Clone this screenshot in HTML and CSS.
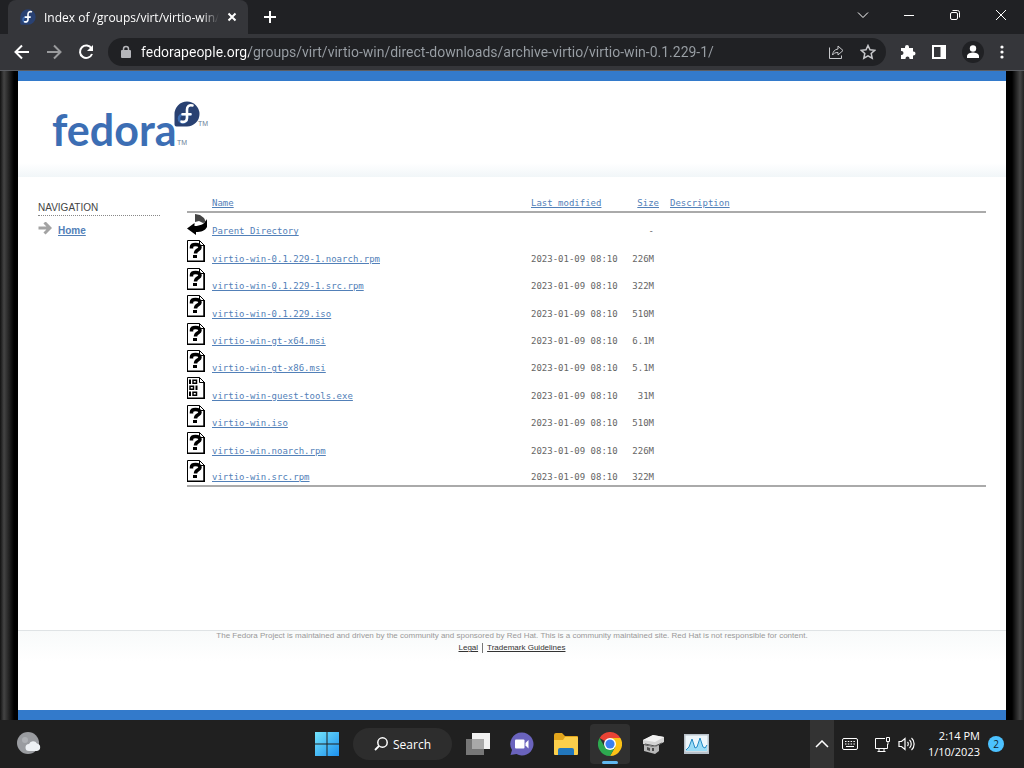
FILE: index.html
```
<!DOCTYPE html>
<html lang="en">
<head>
    <meta charset="UTF-8">
    <meta name="viewport" content="width=device-width, initial-scale=1.0">
    <title>Index of /groups/virt/virtio-win/direct-downloads</title>
    <link rel="stylesheet" href="styles.css">
</head>
<body>
    <!-- Shared symbols -->
    <svg class="symbols" width="0" height="0" aria-hidden="true">
        <symbol id="fedora-badge" viewBox="0 0 26 26">
            <path d="M13 0.5A12.5 12.5 0 1 1 13 25.5H2.5A2 2 0 0 1 0.5 23.500V13A12.5 12.5 0 0 1 13 0.500Z" fill="#294172"/>
            <path d="M13 13v4.500a4 4 0 1 1-4-4h8.500" fill="none" stroke="#3c6eb4" stroke-width="2.600"/>
            <path d="M18.500 4.500c-3.500-1-5.500 1-5.500 4v8.500c0 3-2.500 4.500-5.500 3.700M8.500 13.200h8" fill="none" stroke="#fff" stroke-width="2.600" stroke-linecap="round"/>
        </symbol>
        <symbol id="file-unknown" viewBox="0 0 18 22">
            <path d="M0.500 0.500h12l5 5v16h-17z" fill="#fff" stroke="#000"/>
            <path d="M17 5v16.500M0 21.300h18" stroke="#000" stroke-width="1.500"/>
            <path d="M12.500 0.500v5h5" fill="none" stroke="#000"/>
            <path d="M4.500 8.500V7c0-2 1.500-2.500 4-2.500 3 0 4.500 1 4.500 3 0 2.500-4.500 2-4.500 6" fill="none" stroke="#000" stroke-width="3.500"/>
            <path d="M6 15h4v3H6z"/>
        </symbol>
        <symbol id="file-binary" viewBox="0 0 18 22">
            <path d="M0.500 0.500h12l5 5v16h-17z" fill="#fff" stroke="#000"/>
            <path d="M17 5v16.500M0 21.300h18" stroke="#000" stroke-width="1.500"/>
            <path d="M12.500 0.500v5h5" fill="none" stroke="#000"/>
            <path d="M3 2.500v4.500M9.500 8.500v4.500M3 14.500v4.500" stroke="#000" stroke-width="2"/>
            <path d="M6 3.200h3.500v3H6zM3 9.200h3.500v3H3zM6 15.200h3.500v3H6z" fill="none" stroke="#000" stroke-width="1.500"/>
        </symbol>
    </svg>

    <header class="browser">
        <div class="tab-strip">
            <div class="tab">
                <svg class="tab-icon" width="16" height="16"><use href="#fedora-badge"/></svg>
                <span class="tab-title">Index of /groups/virt/virtio-win/d</span>
                <button class="tab-close" aria-label="Close tab">
                    <svg width="10" height="10" viewBox="0 0 10 10"><path d="M1.500 1.500l7 7M8.500 1.500l-7 7"/></svg>
                </button>
            </div>
            <button class="new-tab" aria-label="New tab">
                <svg width="14" height="14" viewBox="0 0 14 14"><path d="M7 1v12M1 7h12" stroke-width="2"/></svg>
            </button>
            <div class="window-buttons">
                <button aria-label="Search tabs"><svg width="12" height="12" viewBox="0 0 12 12"><path d="M1 3.500l5 5 5-5"/></svg></button>
                <button aria-label="Minimize"><svg width="12" height="12" viewBox="0 0 12 12"><path d="M1 6.500h10"/></svg></button>
                <button aria-label="Restore"><svg width="12" height="12" viewBox="0 0 12 12"><rect x="1.500" y="3.500" width="7" height="7" rx="1.500"/><path d="M3.500 1.500h5a2 2 0 0 1 2 2v5"/></svg></button>
                <button aria-label="Close"><svg width="12" height="12" viewBox="0 0 12 12"><path d="M1 1l10 10M11 1L1 11"/></svg></button>
            </div>
        </div>
        <div class="toolbar">
            <div class="history-buttons">
                <button aria-label="Back"><svg width="16" height="16" viewBox="0 0 16 16"><path d="M15 8H2M8 1.500L1.500 8 8 14.500" stroke-width="2"/></svg></button>
                <button class="disabled" aria-label="Forward"><svg width="16" height="16" viewBox="0 0 16 16"><path d="M1 8h13M8 1.500L14.500 8 8 14.500" stroke-width="2"/></svg></button>
                <button aria-label="Reload"><svg width="16" height="16" viewBox="0 0 16 16"><path d="M13.500 4.500A6.200 6.200 0 1 0 14 10" stroke-width="2"/><path d="M15 1v6H9z" fill="#fff" stroke="none"/></svg></button>
            </div>
            <div class="address-bar">
                <svg width="10" height="14" viewBox="0 0 10 14"><path d="M2.500 6V4a2.500 2.500 0 0 1 5 0v2" stroke="#b5b6ba" stroke-width="1.500"/><rect y="5" width="10" height="8" rx="1" fill="#b5b6ba" stroke="none"/></svg>
                <input class="address" type="text" aria-label="Address" value="fedorapeople.org/groups/virt/virtio-win/direct-downloads/archive-virtio/virtio-win-0.1.229-1/">
                <button aria-label="Share"><svg width="16" height="16" viewBox="0 0 16 16"><path d="M1.500 3.500v11h12v-3"/><path d="M10 2l5 4.500-5 4.500V8.500C7 8.500 5.500 9.500 4.500 11c.5-3.500 2-5.500 5.500-6z"/></svg></button>
                <button aria-label="Bookmark"><svg width="16" height="16" viewBox="0 0 16 16"><path d="M8 1.500l2 4.300 4.700.5-3.500 3.200 1 4.700L8 11.800l-4.200 2.400 1-4.700L1.300 6.300 6 5.800z" stroke-width="1.500"/></svg></button>
            </div>
            <div class="toolbar-buttons">
                <button aria-label="Extensions"><svg width="16" height="16" viewBox="0 0 16 16"><path d="M1 4h4V3a2 2 0 1 1 4 0v1h4v3.500h.5a2 2 0 1 1 0 4H13V15H9.500v-.5a2 2 0 0 0-4 0v.5H1v-4h.5a2 2 0 0 0 0-4H1z" fill="#fff" stroke="none"/></svg></button>
                <button aria-label="Side panel"><svg width="14" height="14" viewBox="0 0 14 14"><rect x="1" y="1" width="12" height="12" stroke-width="2"/><path d="M9 1h4v12H9z" fill="#fff"/></svg></button>
                <button aria-label="Profile"><svg width="22" height="22" viewBox="0 0 22 22"><circle cx="11" cy="11" r="11" fill="#202124" stroke="none"/><circle cx="11" cy="7.500" r="3.200" fill="#fff" stroke="none"/><path d="M5 17v-2c0-2.500 4-3.500 6-3.500s6 1 6 3.500v2z" fill="#fff" stroke="none"/></svg></button>
                <button aria-label="Menu"><svg width="4" height="14" viewBox="0 0 4 14"><g fill="#fff" stroke="none"><circle cx="2" cy="2" r="1.600"/><circle cx="2" cy="7" r="1.600"/><circle cx="2" cy="12" r="1.600"/></g></svg></button>
            </div>
        </div>
    </header>

    <div class="viewport">
        <div class="site">
            <div class="site-header">
                <a href="#" class="logo" aria-label="Fedora">
                    <svg width="158" height="50" viewBox="0 0 158 50">
                        <text class="logo-text" x="1" y="45">fedora</text>
                        <text class="logo-tm" x="126" y="44">TM</text>
                        <text class="logo-tm" x="147" y="25">TM</text>
                        <use href="#fedora-badge" x="123" y="0" width="26" height="26"/>
                    </svg>
                </a>
            </div>

            <div class="site-body">
                <nav class="sidebar">
                    <h2>NAVIGATION</h2>
                    <ul>
                        <li>
                            <svg width="14" height="14" viewBox="0 0 14 14"><path d="M0.500 6H11M6.500 0.500L12 6l-5.500 5.500" fill="none" stroke="#a3a3a3" stroke-width="3"/></svg>
                            <a href="#">Home</a>
                        </li>
                    </ul>
                </nav>

                <main>
                    <table class="listing">
                        <colgroup>
                            <col class="col-icon">
                            <col class="col-name">
                            <col class="col-date">
                            <col class="col-size">
                            <col>
                        </colgroup>
                        <thead>
                            <tr>
                                <th></th>
                                <th><a href="#">Name</a></th>
                                <th><a href="#">Last modified</a></th>
                                <th class="size"><a href="#">Size</a></th>
                                <th class="description"><a href="#">Description</a></th>
                            </tr>
                        </thead>
                        <tbody>
                            <tr>
                                <td class="icon"><svg width="21" height="22" viewBox="0 0 21 22"><path d="M8 0l5 1 4 3 2 4-3 1-4-2-4 1z" fill="#444"/><path d="M20 5v8c-2 4-6 5-11 5v3L0 14.500 7.500 9v3c6 0 10-2 12.500-7z"/></svg></td>
                                <td><a href="#">Parent Directory</a></td><td></td><td class="size">-</td><td></td>
                            </tr>
                            <tr>
                                <td class="icon"><svg width="18" height="22"><use href="#file-unknown"/></svg></td>
                                <td><a href="#">virtio-win-0.1.229-1.noarch.rpm</a></td><td>2023-01-09 08:10</td><td class="size">226M</td><td></td>
                            </tr>
                            <tr>
                                <td class="icon"><svg width="18" height="22"><use href="#file-unknown"/></svg></td>
                                <td><a href="#">virtio-win-0.1.229-1.src.rpm</a></td><td>2023-01-09 08:10</td><td class="size">322M</td><td></td>
                            </tr>
                            <tr>
                                <td class="icon"><svg width="18" height="22"><use href="#file-unknown"/></svg></td>
                                <td><a href="#">virtio-win-0.1.229.iso</a></td><td>2023-01-09 08:10</td><td class="size">510M</td><td></td>
                            </tr>
                            <tr>
                                <td class="icon"><svg width="18" height="22"><use href="#file-unknown"/></svg></td>
                                <td><a href="#">virtio-win-gt-x64.msi</a></td><td>2023-01-09 08:10</td><td class="size">6.1M</td><td></td>
                            </tr>
                            <tr>
                                <td class="icon"><svg width="18" height="22"><use href="#file-unknown"/></svg></td>
                                <td><a href="#">virtio-win-gt-x86.msi</a></td><td>2023-01-09 08:10</td><td class="size">5.1M</td><td></td>
                            </tr>
                            <tr>
                                <td class="icon"><svg width="18" height="22"><use href="#file-binary"/></svg></td>
                                <td><a href="#">virtio-win-guest-tools.exe</a></td><td>2023-01-09 08:10</td><td class="size">31M</td><td></td>
                            </tr>
                            <tr>
                                <td class="icon"><svg width="18" height="22"><use href="#file-unknown"/></svg></td>
                                <td><a href="#">virtio-win.iso</a></td><td>2023-01-09 08:10</td><td class="size">510M</td><td></td>
                            </tr>
                            <tr>
                                <td class="icon"><svg width="18" height="22"><use href="#file-unknown"/></svg></td>
                                <td><a href="#">virtio-win.noarch.rpm</a></td><td>2023-01-09 08:10</td><td class="size">226M</td><td></td>
                            </tr>
                            <tr>
                                <td class="icon"><svg width="18" height="22"><use href="#file-unknown"/></svg></td>
                                <td><a href="#">virtio-win.src.rpm</a></td><td>2023-01-09 08:10</td><td class="size">322M</td><td></td>
                            </tr>
                        </tbody>
                    </table>
                </main>
            </div>

            <footer class="site-footer">
                <p>The Fedora Project is maintained and driven by the community and sponsored by Red Hat. This is a community maintained site. Red Hat is not responsible for content.</p>
                <ul>
                    <li><a href="#">Legal</a></li>
                    <li><a href="#">Trademark Guidelines</a></li>
                </ul>
            </footer>
        </div>
    </div>

    <div class="taskbar">
        <button class="weather" aria-label="Weather">
            <svg width="24" height="24" viewBox="0 0 24 24"><circle cx="11" cy="11" r="11" fill="#9a9ca0"/><circle cx="8" cy="8" r="3" fill="#aeb0b4"/><path d="M12 19a3.500 3.500 0 0 1 0-7 4.500 4.500 0 0 1 8-.5 3.800 3.800 0 0 1 0 7.500z" fill="#eef1f4"/></svg>
        </button>
        <div class="apps">
            <button aria-label="Start">
                <svg width="24" height="24" viewBox="0 0 24 24"><defs><linearGradient id="win" x2="1" y2="1"><stop offset="0" stop-color="#74e4fb"/><stop offset="1" stop-color="#1c90ee"/></linearGradient></defs><path d="M0 0h11.500v11.500H0zM12.500 0H24v11.500H12.500zM0 12.500h11.500V24H0zM12.500 12.500H24V24H12.500z" fill="url(#win)"/></svg>
            </button>
            <button class="search">
                <svg width="14" height="14" viewBox="0 0 14 14"><circle cx="8.500" cy="5.500" r="4.700" fill="none" stroke="#fff" stroke-width="1.500"/><path d="M5 9l-4 4" stroke="#fff" stroke-width="1.800"/></svg>
                Search
            </button>
            <button aria-label="Task view">
                <svg width="24" height="24" viewBox="0 0 24 24"><path d="M6 1h18v16H6z" fill="#f1f1f1"/><path d="M0 7h18v16H0z" fill="#777"/><path d="M6 7h12v10H6z" fill="#a9a9a9"/></svg>
            </button>
            <button aria-label="Chat">
                <svg width="24" height="24" viewBox="0 0 24 24"><path d="M12 0.500a11.500 11.500 0 1 1-5.500 21.600L0.500 23l1.500-5A11.500 11.500 0 0 1 12 .5z" fill="#6a63bd"/><rect x="5" y="7.500" width="9.500" height="9" rx="1" fill="#fff"/><path d="M15.500 11l3-3v8.500l-3-3z" fill="#fff"/></svg>
            </button>
            <button aria-label="File Explorer">
                <svg width="24" height="24" viewBox="1 0 24 24"><path d="M1 3a2 2 0 0 1 2-2h6l3 3h12a1 1 0 0 1 1 1v6H1z" fill="#e2a51c"/><path d="M1 8h9l2-3h12a1 1 0 0 1 1 1v16a1 1 0 0 1-1 1H2a1 1 0 0 1-1-1z" fill="#fccf4b"/><path d="M5 23v-5a2 2 0 0 1 2-2h12a2 2 0 0 1 2 2v5z" fill="#2277bd"/></svg>
            </button>
            <button class="active" aria-label="Chrome">
                <svg width="24" height="24" viewBox="0 0 24 24"><path d="M12 12L1.600 6A12 12 0 0 1 22.400 6z" fill="#ea4335"/><path d="M12 6h10.400A12 12 0 0 1 12 24l5.200-9z" fill="#fbc116"/><path d="M1.600 6A12 12 0 0 0 12 24l5.200-9H6.800z" fill="#2da94f"/><circle cx="12" cy="12" r="6" fill="#fff"/><circle cx="12" cy="12" r="4.600" fill="#3a7ff0"/></svg>
            </button>
            <button aria-label="Server">
                <svg width="22" height="22" viewBox="0 0 22 22"><path d="M1 7l10-5 11 2v5l-9 5L1 11z" fill="#d4d4d4"/><path d="M1 7l10-5 11 2-9 5z" fill="#f2f2f2"/><path d="M2 12l11 2 4-2v6l-4 3-11-3z" fill="#b7b7b7"/><path d="M5 14l3 1v3l-3-1zM10 15h2v3h-2z" fill="#4c4c4c"/><path d="M3 11l10 2 7-3" fill="none" stroke="#555"/></svg>
            </button>
            <button aria-label="Performance monitor">
                <svg width="25" height="20" viewBox="0 0 25 20"><path d="M0 0h25v20H0z" fill="#b8c1ca"/><path d="M1.500 1.500h22v16h-22z" fill="#edf6fb"/><path d="M2 16l3-3 3-8 3 9 2-1 3-9 3 9 2 1 2-3v6H2z" fill="#9bdcf6"/><path d="M2 16l3-3 3-8 3 9 2-1 3-9 3 9 2 1 2-3" fill="none" stroke="#248bc5"/></svg>
            </button>
        </div>
        <div class="tray">
            <button class="tray-more" aria-label="Show hidden icons"><svg width="14" height="8" viewBox="0 0 14 8"><path d="M1 7l6-6 6 6" stroke-width="1.500"/></svg></button>
            <button class="tray-keyboard" aria-label="Keyboard"><svg width="16" height="12" viewBox="0 0 16 12"><rect x="0.500" y="0.500" width="15" height="11" rx="1.500"/><path d="M3 3.500h10M3 6h10" stroke-dasharray="1.500 1.300"/><path d="M4 8.500h8"/></svg></button>
            <button class="tray-status" aria-label="Network and volume">
                <svg width="17" height="17" viewBox="0 0 17 17"><path d="M11 2.500H1.500v10h12V8M5 12.500v3M10 12.500v3M3.500 15.500h8M12.500 1.500h3v4h-3zM14 5.500v3h-1"/></svg>
                <svg width="17" height="16" viewBox="0 0 17 16"><path d="M1 5.500h2.500L7 2.500v11l-3.500-3H1zM9.500 6c1 1 1 3 0 4M11.500 4c2.300 2 2.300 6 0 8M13.500 2c3.500 3 3.500 9 0 12" stroke-width="1.200"/></svg>
            </button>
            <button class="clock"><span>2:14 PM</span><span>1/10/2023</span></button>
            <span class="badge">2</span>
        </div>
    </div>
</body>
</html>
```
FILE: styles.css
```
* {
    box-sizing: border-box;
}
body {
    margin: 0;
    min-height: 100vh;
    display: flex;
    flex-direction: column;
    font-family: "Liberation Sans", Arial, sans-serif;
    background-color: #000;
}
button {
    display: flex;
    align-items: center;
    justify-content: center;
    padding: 0;
    border: none;
    background: none;
    color: #fff;
    font-family: "Open Sans", sans-serif;
}
svg {
    display: block;
    flex-shrink: 0;
}
ul {
    list-style: none;
    margin: 0;
    padding: 0;
}
.symbols {
    position: absolute;
}

/* Browser */
.browser {
    background-color: #35363a;
    border-bottom: 1px solid #5b5d62;
}
.browser button svg,
.address-bar > svg {
    fill: none;
    stroke: #fff;
}
.tab-strip {
    display: flex;
    height: 34px;
    padding-left: 8px;
    background-color: #202124;
}
.tab {
    display: flex;
    align-items: center;
    width: 240px;
    padding: 0 11px 0 12px;
    gap: 8px;
    border-radius: 8px 8px 0 0;
    background-color: #35363a;
}
.tab-title {
    flex: 1;
    min-width: 0;
    white-space: nowrap;
    color: #fff;
    font: 12px "Open Sans", sans-serif;
    -webkit-mask-image: linear-gradient(90deg, #000 90%, transparent);
    mask-image: linear-gradient(90deg, #000 90%, transparent);
}
.tab-close svg {
    stroke-width: 2;
}
.new-tab {
    width: 44px;
}
.window-buttons {
    display: flex;
    align-items: center;
    margin-left: auto;
    padding-bottom: 5px;
}
.window-buttons button {
    width: 46px;
}
.toolbar {
    display: flex;
    align-items: center;
    height: 36px;
    padding: 0 20px 0 14px;
    gap: 14px;
}
.history-buttons,
.toolbar-buttons {
    display: flex;
    align-items: center;
    gap: 16px;
}
.disabled {
    opacity: 0.5;
}
.address-bar {
    flex: 1;
    display: flex;
    align-items: center;
    height: 28px;
    padding: 0 10px 0 13px;
    gap: 10px;
    border-radius: 14px;
    background-color: #202124;
}
.address-bar button + button {
    margin-left: 6px;
}
.address-bar button svg {
    stroke: #c8c9cc;
}
.address {
    flex: 1;
    min-width: 0;
    padding: 0;
    border: none;
    outline: none;
    font: 14px Roboto, sans-serif;
    color: transparent;
    background: linear-gradient(90deg, #fff 108px, #9aa0a6 108px);
    -webkit-background-clip: text;
    background-clip: text;
}

/* Site */
.viewport {
    flex: 1;
    display: flex;
    padding: 0 18px;
    background: linear-gradient(90deg, #111 0, #444 4px, #000 14px, #000 calc(100% - 12px), #444 calc(100% - 4px), #222 100%);
}
.site {
    flex: 1;
    display: flex;
    flex-direction: column;
    border-top: 10px solid #337acb;
    border-bottom: 10px solid #337acb;
    background-color: #fff;
}
.site-header {
    height: 96px;
    padding: 20px 33px;
    background: linear-gradient(#fff 82px, #f1f6f8);
}
.logo {
    display: inline-block;
}
.logo svg {
    overflow: visible;
}
.logo-text {
    font: bold 43px Lato, sans-serif;
    fill: #3c6eb4;
}
.logo-tm {
    font: 7px "Liberation Sans", sans-serif;
    fill: #6d7f99;
}
.site-body {
    flex: 1;
    display: flex;
    gap: 27px;
    padding: 20px;
}
.site a {
    color: #5280b8;
}
.sidebar {
    width: 122px;
}
.sidebar h2 {
    margin: 5px 0;
    padding-bottom: 1px;
    border-bottom: 1px dotted #888;
    color: #444;
    font-size: 10px;
    font-weight: normal;
    line-height: 12px;
}
.sidebar li {
    display: flex;
    align-items: center;
    gap: 6px;
    font-size: 10px;
    font-weight: bold;
}
.sidebar li a {
    padding-top: 4px;
}
main {
    flex: 1;
}
.listing {
    width: 100%;
    height: 290px;
    table-layout: fixed;
    border-collapse: collapse;
    border-bottom: 2px solid #aaa;
    color: #666;
    font-family: "DejaVu Sans Mono", monospace;
    font-size: 9px;
    line-height: 12px;
}
.listing th {
    height: 15px;
    padding: 0 0 2px;
    border-bottom: 2px solid #aaa;
    font-weight: normal;
    text-align: left;
}
.listing td {
    height: 27px;
    padding: 0 0 2px;
    vertical-align: bottom;
}
.listing td.icon {
    padding: 1px 0 0;
    vertical-align: top;
}
.listing td.size {
    padding-right: 5px;
    text-align: right;
}
.listing th.size {
    text-align: right;
}
.listing th.description {
    padding-left: 11px;
}
.col-icon {
    width: 25px;
}
.col-name {
    width: 319px;
}
.col-date {
    width: 92px;
}
.col-size {
    width: 36px;
}
.site-footer {
    height: 80px;
    border-top: 1px solid #dfe3e5;
    background: linear-gradient(#f8fafa, #fff 30px);
    color: #999;
    font-size: 8px;
    line-height: 10px;
    text-align: center;
}
.site-footer p {
    margin: 0 0 2px;
}
.site-footer ul {
    display: flex;
    justify-content: center;
}
.site-footer li + li {
    margin-left: 4px;
    padding-left: 4px;
    border-left: 1px solid #777;
}
.site-footer a {
    color: #333;
}

/* Taskbar */
.taskbar {
    display: grid;
    grid-template-columns: 1fr auto 1fr;
    height: 48px;
    background-color: #202020;
}
.weather {
    justify-self: start;
    padding-left: 17px;
}
.apps {
    display: flex;
    align-items: center;
    gap: 20px;
}
.apps .search {
    width: 99px;
    height: 32px;
    margin: 0 -6px;
    gap: 5px;
    border-radius: 16px;
    background-color: #2d2d2d;
    font-size: 12px;
}
.apps .active {
    position: relative;
    width: 40px;
    height: 40px;
    margin: 0 -8px;
    border-radius: 4px;
    background-color: #303030;
}
.apps .active::after {
    content: "";
    position: absolute;
    bottom: 0;
    width: 16px;
    height: 3px;
    border-radius: 2px;
    background-color: #60b8f0;
}
.tray {
    display: flex;
    align-items: center;
    justify-self: end;
    padding-right: 20px;
}
.tray svg {
    fill: none;
    stroke: #fff;
}
.tray-more {
    align-self: stretch;
    width: 24px;
    background-color: #333;
}
.tray-keyboard {
    margin-left: 8px;
}
.tray-status {
    margin: 0 13px 0 16px;
    gap: 7px;
}
.clock {
    flex-direction: column;
    align-items: flex-end;
    font-size: 11px;
    line-height: 16px;
}
.badge {
    width: 16px;
    height: 16px;
    margin-left: 8px;
    border-radius: 50%;
    background-color: #4cc2ff;
    color: #10222e;
    font: 10px "Open Sans", sans-serif;
    line-height: 16px;
    text-align: center;
}
```
